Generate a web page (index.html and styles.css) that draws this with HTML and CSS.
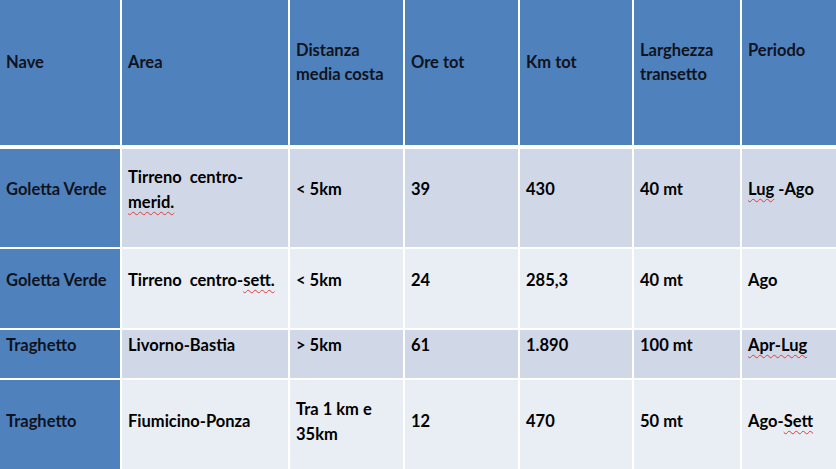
FILE: index.html
```html
<!DOCTYPE html>
<html lang="it">
<head>
<meta charset="utf-8">
<title>Tabella navi</title>
<link rel="stylesheet" href="styles.css">
</head>
<body>
<div class="table">
  <div class="row head">
    <div class="cell"><div class="t">Nave</div></div>
    <div class="cell"><div class="t">Area</div></div>
    <div class="cell"><div class="t">Distanza<br>media costa</div></div>
    <div class="cell"><div class="t">Ore tot</div></div>
    <div class="cell"><div class="t">Km tot</div></div>
    <div class="cell"><div class="t">Larghezza<br>transetto</div></div>
    <div class="cell"><div class="t">Periodo<br>&nbsp;</div></div>
  </div>
  <div class="row odd r1">
    <div class="cell first"><div class="t">Goletta Verde</div></div>
    <div class="cell"><div class="t">Tirreno&nbsp; centro-<br><span class="sp">merid.</span></div></div>
    <div class="cell"><div class="t">&lt; 5km</div></div>
    <div class="cell"><div class="t">39</div></div>
    <div class="cell"><div class="t">430</div></div>
    <div class="cell"><div class="t">40 mt</div></div>
    <div class="cell"><div class="t"><span class="sp">Lug</span> -Ago</div></div>
  </div>
  <div class="row even r2">
    <div class="cell first"><div class="t">Goletta Verde</div></div>
    <div class="cell"><div class="t">Tirreno&nbsp; centro-<span class="sp">sett.</span></div></div>
    <div class="cell"><div class="t">&lt; 5km</div></div>
    <div class="cell"><div class="t">24</div></div>
    <div class="cell"><div class="t">285,3</div></div>
    <div class="cell"><div class="t">40 mt</div></div>
    <div class="cell"><div class="t">Ago</div></div>
  </div>
  <div class="row odd r3">
    <div class="cell first"><div class="t">Traghetto</div></div>
    <div class="cell"><div class="t">Livorno-Bastia</div></div>
    <div class="cell"><div class="t">&gt; 5km</div></div>
    <div class="cell"><div class="t">61</div></div>
    <div class="cell"><div class="t">1.890</div></div>
    <div class="cell"><div class="t">100 mt</div></div>
    <div class="cell"><div class="t"><span class="sp">Apr-Lug</span></div></div>
  </div>
  <div class="row even r4">
    <div class="cell first"><div class="t">Traghetto</div></div>
    <div class="cell"><div class="t">Fiumicino-Ponza</div></div>
    <div class="cell"><div class="t">Tra 1 km e<br>35km</div></div>
    <div class="cell"><div class="t">12</div></div>
    <div class="cell"><div class="t">470</div></div>
    <div class="cell"><div class="t">50 mt</div></div>
    <div class="cell"><div class="t">Ago-<span class="sp">Sett</span></div></div>
  </div>
</div>
</body>
</html>
```
FILE: styles.css
```css
html, body {
  margin: 0;
  padding: 0;
  background: #ffffff;
  overflow: hidden;
}
body {
  width: 836px;
  height: 469px;
  font-family: Lato, "Open Sans", "Liberation Sans", sans-serif;
  font-weight: 700;
  font-size: 16.5px;
  line-height: 24.5px;
  color: #000;
}
.table {
  display: flex;
  flex-direction: column;
  gap: 2px;
  background: #ffffff;
}
.row {
  display: grid;
  grid-template-columns: 120px 166px 113px 113px 112px 106px 94px;
  column-gap: 2px;
}
.cell {
  display: flex;
  align-items: center;
  padding: 0 4px 17px 6px;
}
.t {
  white-space: nowrap;
}
.head {
  height: 145px;
  margin-bottom: 2px;
}
.head .cell {
  background: #4f81bd;
  color: #0f1320;
  padding-bottom: 21px;
}
.odd .cell { background: #d0d8e8; }
.even .cell { background: #e9edf4; }
.row .cell.first { background: #4f81bd; color: #0f1320; }
.r1 { height: 98px; }
.r2 { height: 79px; }
.r3 { height: 48px; }
.r4 { height: 100px; }
.sp {
  text-decoration: underline wavy #e03a3a;
  text-decoration-thickness: 1px;
  text-underline-offset: 3px;
}
```
